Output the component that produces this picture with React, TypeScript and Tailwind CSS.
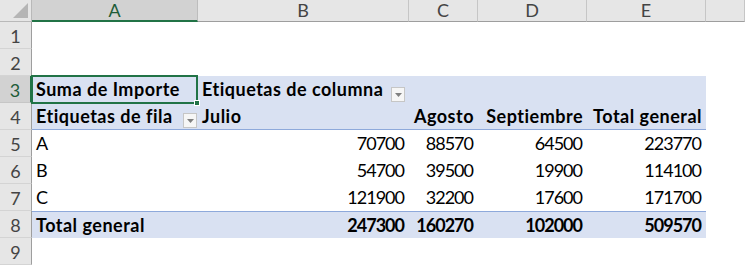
import React from "react";

const cols = ["A", "B", "C", "D", "E", ""];
const widths = [32, 166, 211, 69, 109, 119, 39];

type Cell = { text?: string; bold?: boolean; right?: boolean; filter?: boolean };

const band = "bg-[#d9e1f2]";

const rows: { fill?: boolean; topLine?: boolean; bottomLine?: boolean; cells: Cell[] }[] = [
  { cells: [] },
  { cells: [] },
  {
    fill: true,
    cells: [
      { text: "Suma de Importe", bold: true },
      { text: "Etiquetas de columna", bold: true, filter: true },
      {},
      {},
      {},
    ],
  },
  {
    fill: true,
    bottomLine: true,
    cells: [
      { text: "Etiquetas de fila", bold: true, filter: true },
      { text: "Julio", bold: true },
      { text: "Agosto", bold: true, right: true },
      { text: "Septiembre", bold: true, right: true },
      { text: "Total general", bold: true, right: true },
    ],
  },
  {
    cells: [
      { text: "A" },
      { text: "70700", right: true },
      { text: "88570", right: true },
      { text: "64500", right: true },
      { text: "223770", right: true },
    ],
  },
  {
    cells: [
      { text: "B" },
      { text: "54700", right: true },
      { text: "39500", right: true },
      { text: "19900", right: true },
      { text: "114100", right: true },
    ],
  },
  {
    cells: [
      { text: "C" },
      { text: "121900", right: true },
      { text: "32200", right: true },
      { text: "17600", right: true },
      { text: "171700", right: true },
    ],
  },
  {
    fill: true,
    topLine: true,
    cells: [
      { text: "Total general", bold: true },
      { text: "247300", bold: true, right: true },
      { text: "160270", bold: true, right: true },
      { text: "102000", bold: true, right: true },
      { text: "509570", bold: true, right: true },
    ],
  },
  { cells: [] },
];

function FilterButton({ tight }: { tight?: boolean }) {
  return (
    <span
      className={`mb-[1px] ml-auto flex h-[15px] w-[14px] shrink-0 items-center justify-center self-end border border-[#c6c6c6] bg-[#f6f6f6] ${
        tight ? "-mr-[3px]" : ""
      }`}
    >
      <svg width="7" height="4" viewBox="0 0 7 4">
        <path d="M0 0h7L3.5 4z" fill="#808080" />
      </svg>
    </span>
  );
}

export default function App() {
  return (
    <div
      className="relative h-[265px] w-[745px] overflow-hidden bg-white text-[18px] text-black"
      style={{ fontFamily: "Lato, 'Liberation Sans', sans-serif" }}
    >
      <div
        className="grid"
        style={{ gridTemplateColumns: widths.map((w) => `${w}px`).join(" "), gridTemplateRows: "22px repeat(9, 27px)" }}
      >
        {/* corner */}
        <div className="relative border-r border-b border-[#b9b9b9] bg-[#e6e6e6]">
          <svg className="absolute right-[3px] bottom-[3px]" width="15" height="15" viewBox="0 0 15 15">
            <path d="M15 0V15H0z" fill="#b5b5b5" />
          </svg>
        </div>
        {/* column headers */}
        {cols.map((c, i) => (
          <div
            key={c + i}
            className={
              i === 0
                ? "border-r border-b-2 border-r-[#bdbdbd] border-b-[#217346] bg-[#d2d2d2] text-center leading-[20px] text-[#1e5c38]"
                : "border-r border-b border-[#c6c6c6] border-b-[#9e9e9e] bg-[#e6e6e6] text-center leading-[21px] text-[#444]"
            }
          >
            {c}
          </div>
        ))}

        {rows.map((r, ri) => (
          <React.Fragment key={ri}>
            <div
              className={
                ri === 2
                  ? "border-r-2 border-b border-r-[#217346] border-b-[#c6c6c6] bg-[#d2d2d2] pt-[1px] text-center leading-[26px] text-[#1e5c38]"
                  : "border-r border-b border-r-[#9e9e9e] border-b-[#d4d4d4] bg-[#e6e6e6] pt-[1px] text-center leading-[26px] text-[#444]"
              }
            >
              {ri + 1}
            </div>
            {[0, 1, 2, 3, 4].map((ci) => {
              const cell = r.cells[ci] || {};
              const numeric = !!cell.text && /^\d+$/.test(cell.text);
              const lines = [
                r.fill ? band : "",
                r.bottomLine ? "border-b border-[#8ea9db]" : "",
                r.topLine ? "border-t border-[#8ea9db]" : "",
              ].join(" ");
              return (
                <div
                  key={ci}
                  className={`flex gap-1 whitespace-nowrap px-[4px] leading-[27px] ${lines} ${
                    cell.right ? "justify-end" : "justify-start"
                  } ${cell.bold ? "font-bold" : ""} ${numeric ? "tracking-[-1px] pr-[5px]" : "tracking-[0.5px]"}`}
                >
                  {cell.text && <span>{cell.text}</span>}
                  {cell.filter && <FilterButton tight={ci === 0} />}
                </div>
              );
            })}
            <div />
          </React.Fragment>
        ))}
      </div>

      {/* active cell A3 */}
      <div className="pointer-events-none absolute left-[31px] top-[75px] h-[29px] w-[167px] border-2 border-[#217346]" />
      <div className="pointer-events-none absolute left-[194px] top-[100px] h-[6px] w-[6px] border border-white bg-[#217346]" />
    </div>
  );
}
